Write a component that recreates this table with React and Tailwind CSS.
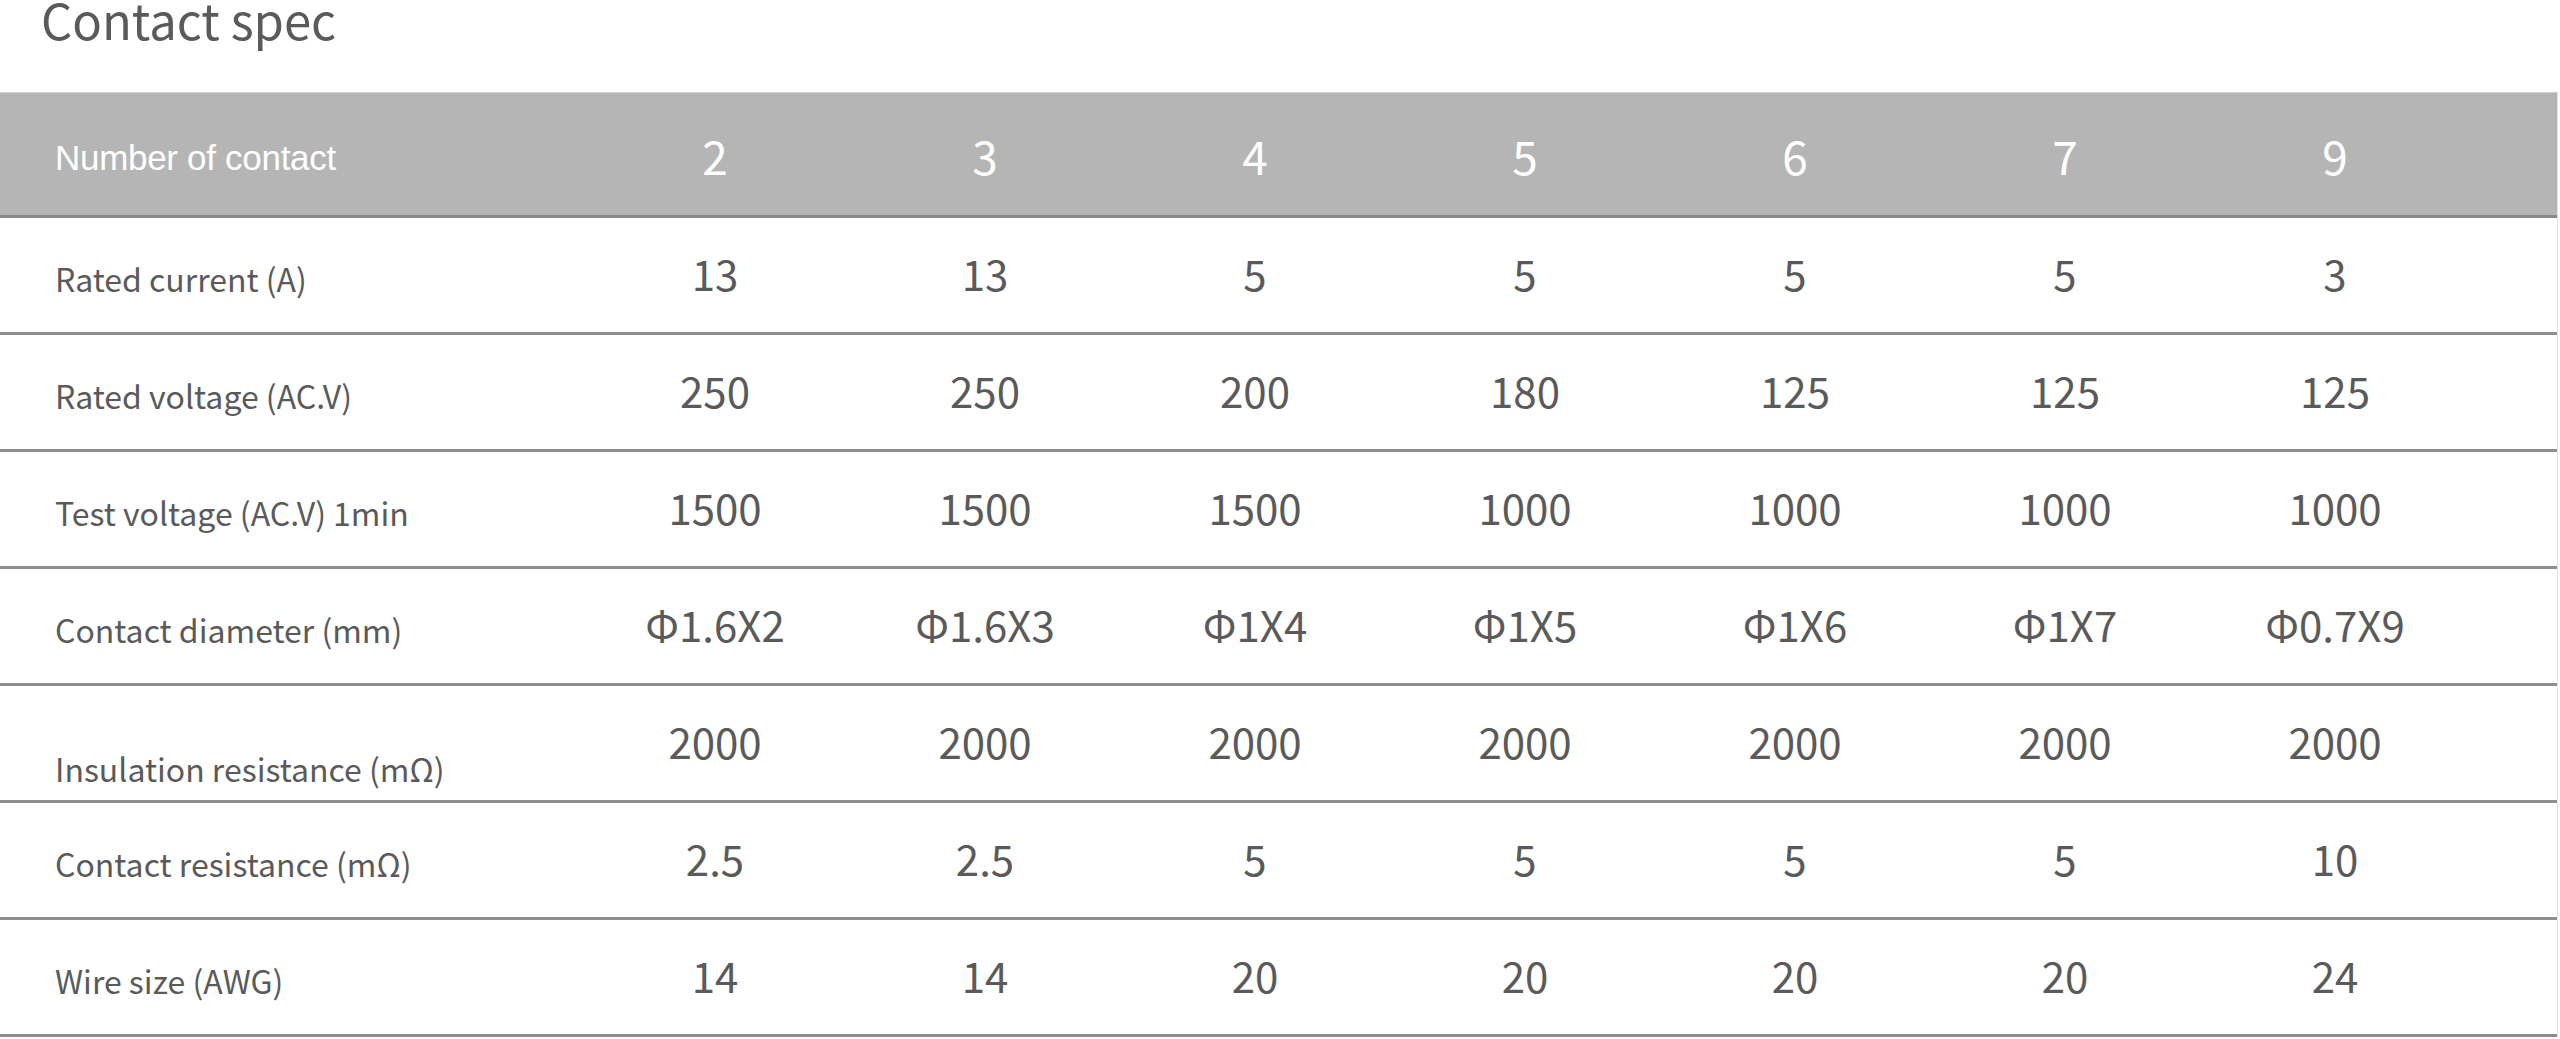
import React from "react";

const cols = ["2", "3", "4", "5", "6", "7", "9"];
const rows = [
  ["Rated current (A)", ["13", "13", "5", "5", "5", "5", "3"]],
  ["Rated voltage (AC.V)", ["250", "250", "200", "180", "125", "125", "125"]],
  ["Test voltage (AC.V) 1min", ["1500", "1500", "1500", "1000", "1000", "1000", "1000"]],
  ["Contact diameter (mm)", ["Φ1.6X2", "Φ1.6X3", "Φ1X4", "Φ1X5", "Φ1X6", "Φ1X7", "Φ0.7X9"]],
  ["Insulation resistance (mΩ)", ["2000", "2000", "2000", "2000", "2000", "2000", "2000"], true],
  ["Contact resistance (mΩ)", ["2.5", "2.5", "5", "5", "5", "5", "10"]],
  ["Wire size (AWG)", ["14", "14", "20", "20", "20", "20", "24"]],
];

const gridCols = "grid grid-cols-[580px_repeat(7,270px)_1fr]";

export default function App() {
  return (
    <div className="w-[2560px] h-[1039px] bg-white overflow-hidden font-['Noto_Sans_CJK_JP','Noto_Sans',sans-serif] text-[#5a5a5a]">
      <div className="h-[92px] pl-[41px] pt-[1px]">
        <div className="text-[49px] leading-[0.74] text-[#5a5a5a]">Contact spec</div>
      </div>
      <div className="w-[2558px] border-r border-[#e2e2e2]">
        <div className={`${gridCols} h-[126px] bg-[#b5b5b5] border-t border-[#d0d0d0] border-b-[3px] border-b-[#8a8a8a] items-center text-white`}>
          <div className="pl-[55px] pt-[9px] text-[35px] font-['Liberation_Sans',sans-serif] tracking-[-0.3px]">Number of contact</div>
          {cols.map((c) => (
            <div key={c} className="text-center text-[46px] pt-[2px]">{c}</div>
          ))}
          <div />
        </div>
        {rows.map(([label, vals, special]) => (
          <div key={label} className={`${gridCols} h-[117px] border-b-[3px] border-[#8e8e8e] items-center`}>
            <div className={`pl-[55px] text-[32px] ${special ? "pt-[50px]" : "pt-[5px]"}`}>{label}</div>
            {vals.map((v, i) => (
              <div key={i} className="text-center text-[42px] pb-[5px]">{v}</div>
            ))}
            <div />
          </div>
        ))}
      </div>
    </div>
  );
}
